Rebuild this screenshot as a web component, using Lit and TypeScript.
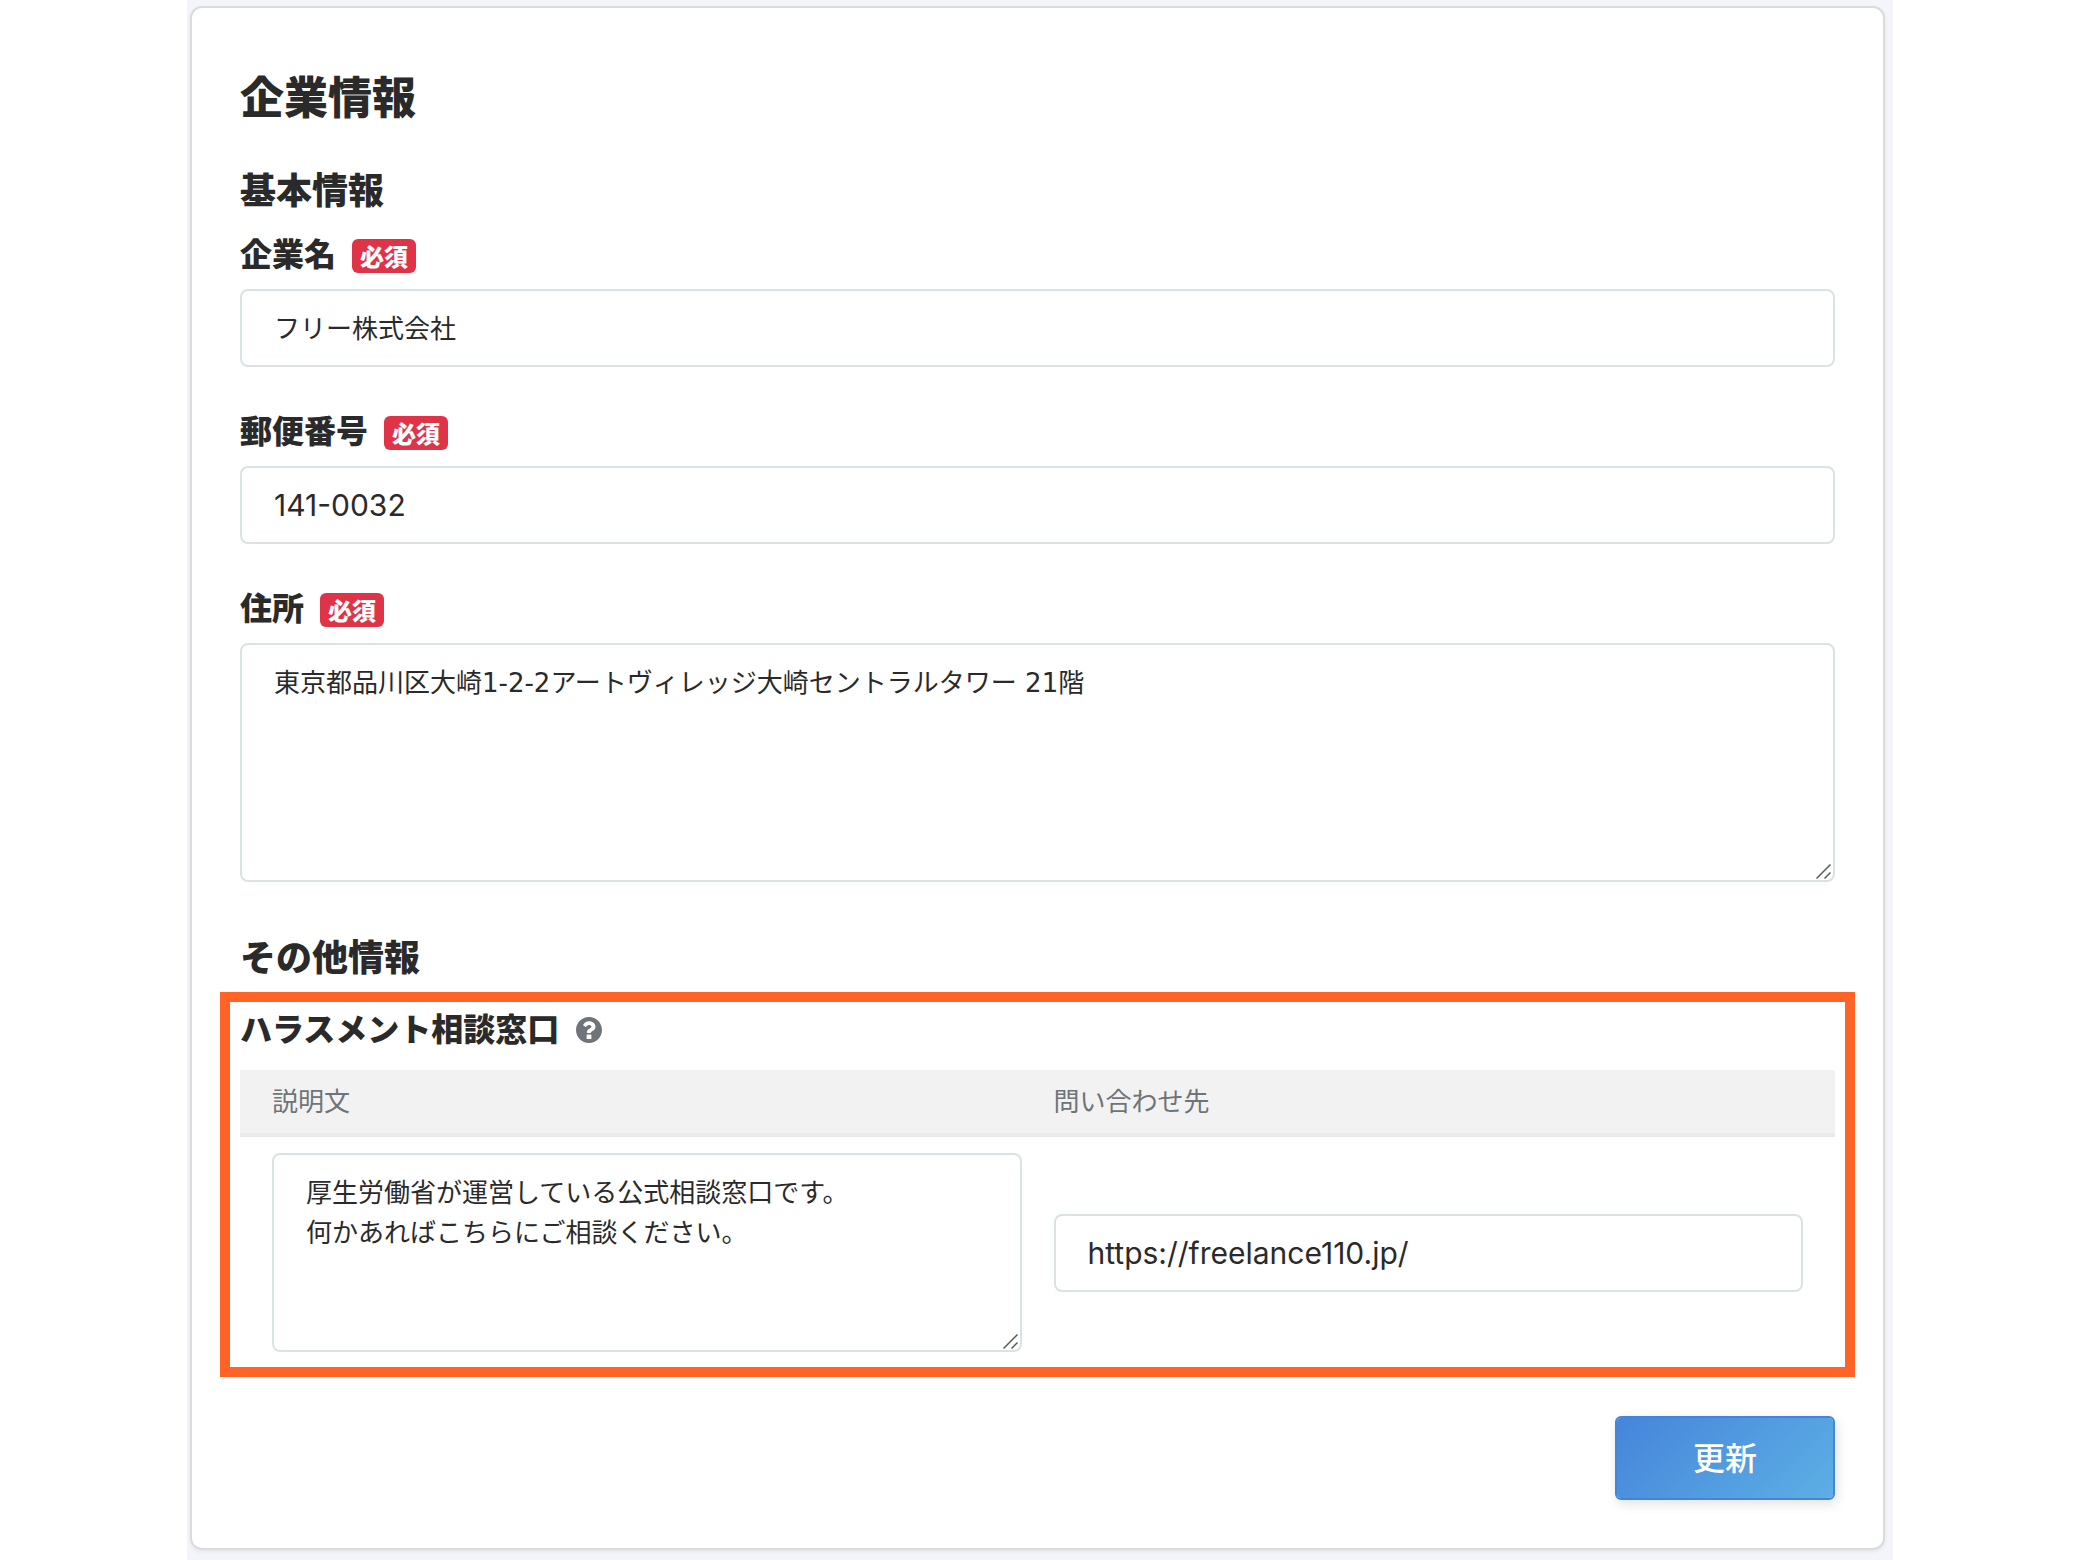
import { LitElement, html, css } from "lit";
import { customElement, property } from "lit/decorators.js";

const controls = css`
  * {
    box-sizing: border-box;
  }
  .control {
    display: block;
    width: 100%;
    margin: 0;
    border: 2px solid #d9e3e5;
    border-radius: 8px;
    background: #fff;
    color: #2a2a2a;
    font-family: Inter, "Noto Sans CJK JP", sans-serif;
    font-size: 26px;
    line-height: 40px;
  }
  .input {
    height: 78px;
    padding: 0 32px 4px;
  }
  .latin {
    padding-bottom: 0;
    font-size: 30px;
  }
  .area {
    padding: 18px 32px 17px;
    font-family: "DejaVu Sans", "Noto Sans CJK JP", sans-serif;
    resize: vertical;
  }
  .area::-webkit-resizer {
    background: transparent;
  }
  .area-wrap {
    position: relative;
  }
  .grip {
    position: absolute;
    right: 4px;
    bottom: 3px;
    width: 15px;
    height: 15px;
    pointer-events: none;
  }
`;

const grip = html`<svg class="grip" viewBox="0 0 15 15" aria-hidden="true">
  <path d="M0.5 14.5 14.5 0.5M8.5 14.5l6-6" fill="none" stroke="#5a5a5a" stroke-width="1.5" />
</svg>`;

@customElement("form-field")
class FormField extends LitElement {
  @property() label = "";
  @property() value = "";
  @property({ type: Number }) rows = 0;
  @property({ type: Boolean }) latin = false;

  static styles = [
    controls,
    css`
      :host {
        display: block;
      }
      .head {
        display: flex;
        align-items: baseline;
        gap: 16px;
        margin-bottom: 13px;
      }
      .label {
        font-size: 32px;
        line-height: 48px;
        font-weight: 900;
      }
      .badge {
        padding: 0 8px;
        border-radius: 6px;
        background: #df3348;
        color: #fff;
        font-size: 24px;
        line-height: 34px;
        font-weight: 900;
      }
    `,
  ];

  render() {
    return html`
      <div class="head">
        <label class="label" for="control">${this.label}</label>
        <span class="badge">必須</span>
      </div>
      ${this.rows
        ? html`<div class="area-wrap">
            <textarea class="control area" id="control" rows=${this.rows} required .value=${this.value}></textarea>
            ${grip}
          </div>`
        : html`<input
            class="control input ${this.latin ? "latin" : ""}"
            id="control"
            type="text"
            required
            .value=${this.value}
          />`}
    `;
  }
}

@customElement("app-root")
class AppRoot extends LitElement {
  static styles = [
    controls,
    css`
      :host {
        display: block;
        background: #fff;
        color: #2a2a2a;
        font-family: "Noto Sans CJK JP", sans-serif;
      }
      .page {
        max-width: 1706px;
        min-height: 100vh;
        margin: 0 auto;
        padding: 6px 8px 10px 3px;
        background: #f4f5fa;
      }
      .card {
        padding: 54px 48px 48px;
        border: 2px solid #dadcdc;
        border-radius: 12px;
        background: #fff;
        box-shadow: 0 2px 4px rgba(0, 0, 0, 0.06);
      }
      .title,
      .section,
      .subtitle {
        font-weight: 900;
      }
      .title {
        margin: 0 0 33px;
        font-size: 44px;
        line-height: 66px;
      }
      .section {
        margin: 0;
        font-size: 36px;
        line-height: 54px;
      }
      .fields {
        display: grid;
        gap: 38px;
        margin: 13px 0 46px;
      }
      .highlight {
        margin: 10px -20px 39px;
        padding: 1px 10px 0;
        border: 10px solid #ff6426;
      }
      .subhead {
        display: flex;
        align-items: flex-end;
        gap: 17px;
        margin-bottom: 19px;
      }
      .subtitle {
        margin: 0;
        font-size: 32px;
        line-height: 48px;
      }
      .help {
        display: block;
        padding: 0 0 8px;
        border: 0;
        background: none;
        color: #6e7478;
        cursor: pointer;
      }
      .help-icon {
        display: block;
        width: 26px;
        height: 26px;
      }
      .table {
        width: 100%;
        table-layout: fixed;
        border-collapse: separate;
        border-spacing: 0;
      }
      .th {
        padding: 10px 16px 13px;
        border-bottom: 4px solid #e9eaea;
        background: #f2f2f2;
        color: #6e7478;
        font-size: 26px;
        line-height: 40px;
        font-weight: 400;
        text-align: left;
      }
      .td {
        padding: 16px 16px 15px;
        vertical-align: middle;
      }
      .th:first-child,
      .td:first-child {
        padding-left: 32px;
      }
      .th:last-child,
      .td:last-child {
        padding-right: 32px;
      }
      .actions {
        display: flex;
        justify-content: flex-end;
      }
      .submit {
        min-width: 220px;
        height: 84px;
        padding: 0 32px 4px;
        border: 2px solid #4484da;
        border-radius: 6px;
        background: linear-gradient(135deg, #4585da, #5dafe5) padding-box;
        box-shadow: 2px 4px 12px rgba(0, 0, 0, 0.12);
        color: #fff;
        font-family: inherit;
        font-size: 32px;
        line-height: 48px;
        font-weight: 500;
        cursor: pointer;
      }
    `,
  ];

  render() {
    return html`
      <main class="page">
        <form class="card" @submit=${(e: Event) => e.preventDefault()}>
          <h1 class="title">企業情報</h1>
          <h2 class="section">基本情報</h2>
          <div class="fields">
            <form-field label="企業名" value="フリー株式会社"></form-field>
            <form-field label="郵便番号" value="141-0032" latin></form-field>
            <form-field
              label="住所"
              rows="5"
              value="東京都品川区大崎1-2-2アートヴィレッジ大崎セントラルタワー 21階"
            ></form-field>
          </div>
          <h2 class="section">その他情報</h2>
          <section class="highlight">
            <div class="subhead">
              <h3 class="subtitle">ハラスメント相談窓口</h3>
              <button class="help" type="button" aria-label="ヘルプ">
                <svg class="help-icon" viewBox="8 8 496 496" aria-hidden="true">
                  <path
                    fill="currentColor"
                    d="M504 256c0 136.997-111.043 248-248 248S8 392.997 8 256C8 119.083 119.043 8 256 8s248 111.083 248 248zM262.655 90c-54.497 0-89.255 22.957-116.549 63.758-3.536 5.286-2.353 12.415 2.715 16.258l34.699 26.31c5.205 3.947 12.621 3.008 16.665-2.122 17.864-22.658 30.113-35.797 57.303-35.797 20.429 0 45.698 13.148 45.698 32.958 0 14.976-12.363 22.667-32.534 33.976C247.128 238.528 216 254.941 216 296v4c0 6.627 5.373 12 12 12h56c6.627 0 12-5.373 12-12v-1.333c0-28.462 83.186-29.647 83.186-106.667 0-58.002-60.165-102-116.531-102zM222 340c-6.600 0-12 5.400-12 12v64c0 6.600 5.400 12 12 12h68c6.600 0 12-5.400 12-12v-64c0-6.600-5.400-12-12-12z"
                  />
                </svg>
              </button>
            </div>
            <table class="table">
              <thead>
                <tr>
                  <th class="th" scope="col" id="desc-head">説明文</th>
                  <th class="th" scope="col" id="contact-head">問い合わせ先</th>
                </tr>
              </thead>
              <tbody>
                <tr>
                  <td class="td">
                    <div class="area-wrap">
                      <textarea
                        class="control area"
                        rows="4"
                        aria-labelledby="desc-head"
                        .value=${"厚生労働省が運営している公式相談窓口です。\n何かあればこちらにご相談ください。"}
                      ></textarea>
                      ${grip}
                    </div>
                  </td>
                  <td class="td">
                    <input
                      class="control input latin"
                      type="text"
                      aria-labelledby="contact-head"
                      .value=${"https://freelance110.jp/"}
                    />
                  </td>
                </tr>
              </tbody>
            </table>
          </section>
          <div class="actions">
            <button class="submit" type="submit">更新</button>
          </div>
        </form>
      </main>
    `;
  }
}
